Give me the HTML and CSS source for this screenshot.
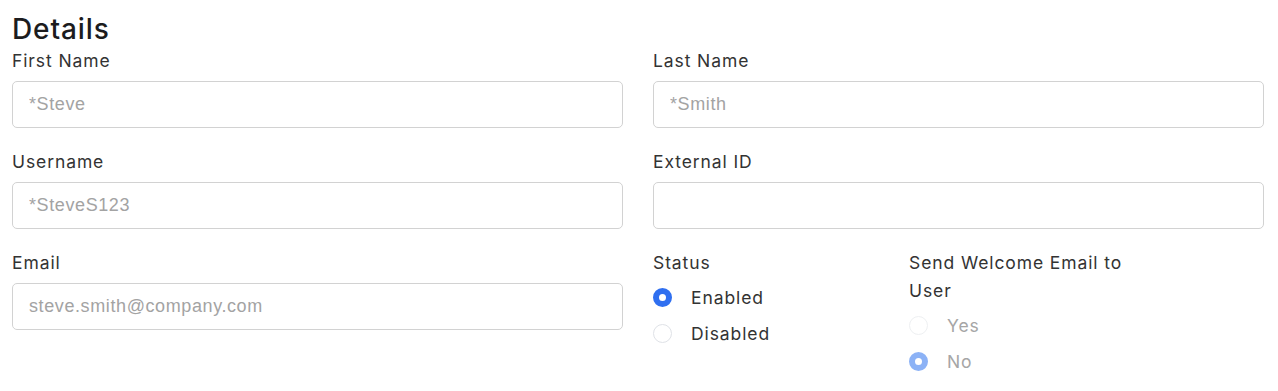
FILE: index.html
```html
<!DOCTYPE html>
<html>
<head>
  <link rel="stylesheet" href="styles.css">
</head>
<body>
  <div class="details">
    <h2 class="title">Details</h2>
    <div class="form-grid">
      <div class="field">
        <label class="field-label" for="first-name">First Name</label>
        <input class="text-input" type="text" id="first-name" placeholder="*Steve">
      </div>
      <div class="field">
        <label class="field-label" for="last-name">Last Name</label>
        <input class="text-input" type="text" id="last-name" placeholder="*Smith">
      </div>
      <div class="field">
        <label class="field-label" for="username">Username</label>
        <input class="text-input" type="text" id="username" placeholder="*SteveS123">
      </div>
      <div class="field">
        <label class="field-label" for="external-id">External ID</label>
        <input class="text-input" type="text" id="external-id">
      </div>
      <div class="field">
        <label class="field-label" for="email">Email</label>
        <input class="text-input" type="text" id="email" placeholder="steve.smith@company.com">
      </div>
      <div class="options">
        <div class="option-group status-group">
          <div class="field-label">Status</div>
          <label class="radio-row">
            <input class="radio" type="radio" name="status" checked>
            <span>Enabled</span>
          </label>
          <label class="radio-row">
            <input class="radio" type="radio" name="status">
            <span>Disabled</span>
          </label>
        </div>
        <div class="option-group welcome-group">
          <div class="field-label">Send Welcome Email to User</div>
          <label class="radio-row disabled">
            <input class="radio" type="radio" name="welcome" disabled>
            <span>Yes</span>
          </label>
          <label class="radio-row disabled">
            <input class="radio" type="radio" name="welcome" checked disabled>
            <span>No</span>
          </label>
        </div>
      </div>
    </div>
  </div>
</body>
</html>
```

FILE: styles.css
```css
body {
  margin: 0;
  background-color: #fff;
  font-family: Inter, "Noto Sans", sans-serif;
  color: #333;
}

.details {
  padding: 12px 14px 0 12px;
}

.title {
  margin: 0;
  font-size: 28px;
  font-weight: 500;
  line-height: 35px;
  letter-spacing: 0.9px;
  color: #1c1c1e;
}

.form-grid {
  display: grid;
  grid-template-columns: 1fr 1fr;
  column-gap: 30px;
  row-gap: 20px;
}

.field {
  display: flex;
  flex-direction: column;
}

.field-label {
  font-size: 17.5px;
  line-height: 28px;
  letter-spacing: 0.9px;
  color: #333;
  margin-bottom: 6px;
}

.text-input {
  box-sizing: border-box;
  height: 47px;
  padding: 0 16px;
  font-family: "Liberation Sans", Arial, sans-serif;
  font-size: 18px;
  letter-spacing: 0.6px;
  color: #333;
  border: 1px solid #d2d2d2;
  border-radius: 5px;
  outline: none;
}

.text-input::placeholder {
  color: #a3a3a3;
}

.options {
  display: flex;
}

.option-group {
  display: flex;
  flex-direction: column;
}

.status-group {
  width: 256px;
}

.welcome-group {
  width: 232px;
}

.option-group .field-label {
  margin-bottom: 2px;
}

.radio-row {
  display: flex;
  align-items: center;
  gap: 19px;
  height: 36px;
  font-size: 17.5px;
  letter-spacing: 0.9px;
  color: #333;
}

.radio {
  appearance: none;
  box-sizing: border-box;
  width: 19px;
  height: 19px;
  margin: 0;
  border: 1px solid #dfe2e7;
  border-radius: 50%;
  background-color: #fff;
}

.radio:checked {
  border: 6px solid #2f6ff0;
}

.radio-row.disabled {
  color: #a6a6a6;
}

.radio-row.disabled .radio {
  border-color: #eef0f2;
}

.radio-row.disabled .radio:checked {
  border-color: #8cb2f6;
}
```
